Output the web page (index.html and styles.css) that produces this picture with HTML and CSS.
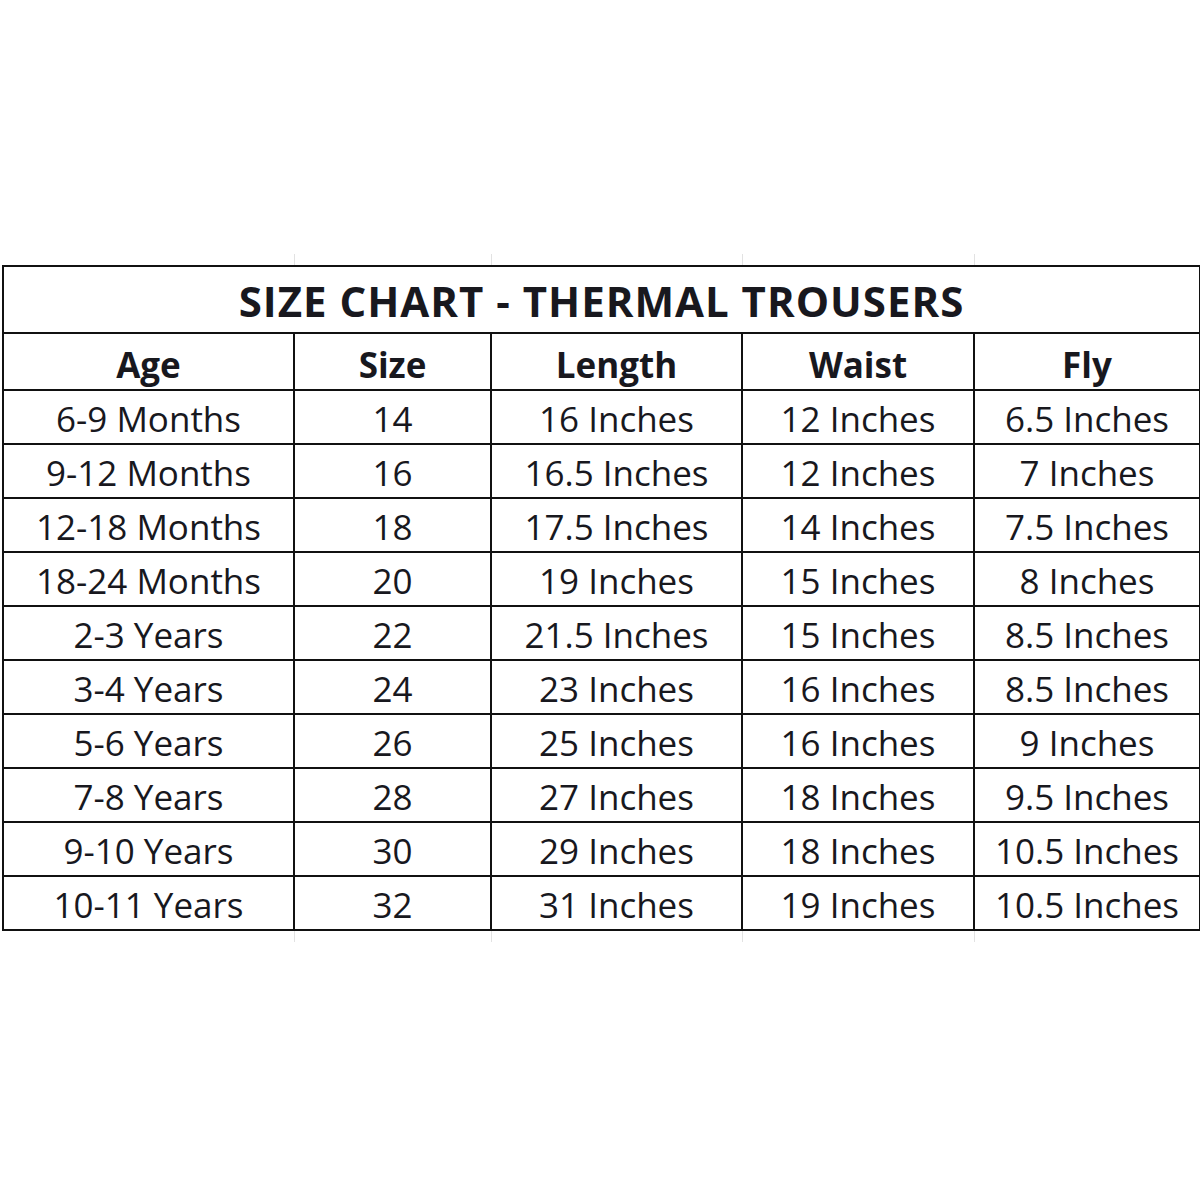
FILE: index.html
```html
<!DOCTYPE html>
<html>
<head>
<meta charset="utf-8">
<link rel="stylesheet" href="styles.css">
</head>
<body>
<div class="page">
<table class="chart">
<colgroup>
<col class="c1"><col class="c2"><col class="c3"><col class="c4"><col class="c5">
</colgroup>
<tr class="grid-row"><td></td><td></td><td></td><td></td><td></td></tr>
<tr class="title-row"><th colspan="5">SIZE CHART - THERMAL TROUSERS</th></tr>
<tr class="head-row"><th>Age</th><th>Size</th><th>Length</th><th>Waist</th><th>Fly</th></tr>
<tr><td>6-9 Months</td><td>14</td><td>16 Inches</td><td>12 Inches</td><td>6.5 Inches</td></tr>
<tr><td>9-12 Months</td><td>16</td><td>16.5 Inches</td><td>12 Inches</td><td>7 Inches</td></tr>
<tr><td>12-18 Months</td><td>18</td><td>17.5 Inches</td><td>14 Inches</td><td>7.5 Inches</td></tr>
<tr><td>18-24 Months</td><td>20</td><td>19 Inches</td><td>15 Inches</td><td>8 Inches</td></tr>
<tr><td>2-3 Years</td><td>22</td><td>21.5 Inches</td><td>15 Inches</td><td>8.5 Inches</td></tr>
<tr><td>3-4 Years</td><td>24</td><td>23 Inches</td><td>16 Inches</td><td>8.5 Inches</td></tr>
<tr><td>5-6 Years</td><td>26</td><td>25 Inches</td><td>16 Inches</td><td>9 Inches</td></tr>
<tr><td>7-8 Years</td><td>28</td><td>27 Inches</td><td>18 Inches</td><td>9.5 Inches</td></tr>
<tr><td>9-10 Years</td><td>30</td><td>29 Inches</td><td>18 Inches</td><td>10.5 Inches</td></tr>
<tr><td>10-11 Years</td><td>32</td><td>31 Inches</td><td>19 Inches</td><td>10.5 Inches</td></tr>
<tr class="grid-row"><td></td><td></td><td></td><td></td><td></td></tr>
</table>
</div>
</body>
</html>
```
FILE: styles.css
```css
html, body {
  margin: 0;
  padding: 0;
  background: #ffffff;
}
.page {
  width: 1200px;
  height: 1200px;
  padding: 254px 0 0 2px;
  box-sizing: border-box;
}
.chart {
  border-collapse: collapse;
  table-layout: fixed;
  width: 1197px;
  font-family: "Open Sans", "Liberation Sans", sans-serif;
  color: #18181e;
}
.c1 { width: 291px; }
.c2 { width: 197px; }
.c3 { width: 251px; }
.c4 { width: 232px; }
.c5 { width: 226px; }
.chart th, .chart td {
  border: 2px solid #111;
  text-align: center;
  padding: 0;
  white-space: nowrap;
  overflow: hidden;
}
.chart .grid-row td {
  height: 9px;
  border-top: none;
  border-bottom: none;
  border-left: 1px solid #e2e2e2;
  border-right: 1px solid #e2e2e2;
}
.chart .grid-row td:first-child {
  border-left: none;
}
.chart .grid-row td:last-child {
  border-right: none;
}
.title-row th {
  height: 63px;
  font-size: 42px;
  font-weight: 700;
  letter-spacing: 1px;
  padding-top: 2px;
}
.head-row th {
  height: 50px;
  font-size: 35px;
  font-weight: 700;
  padding-top: 5px;
}
.chart td {
  height: 52px;
  font-size: 35px;
  font-weight: 400;
  padding-top: 2px;
}
.chart tr:not(.grid-row) td {
  height: 50px;
}
```
